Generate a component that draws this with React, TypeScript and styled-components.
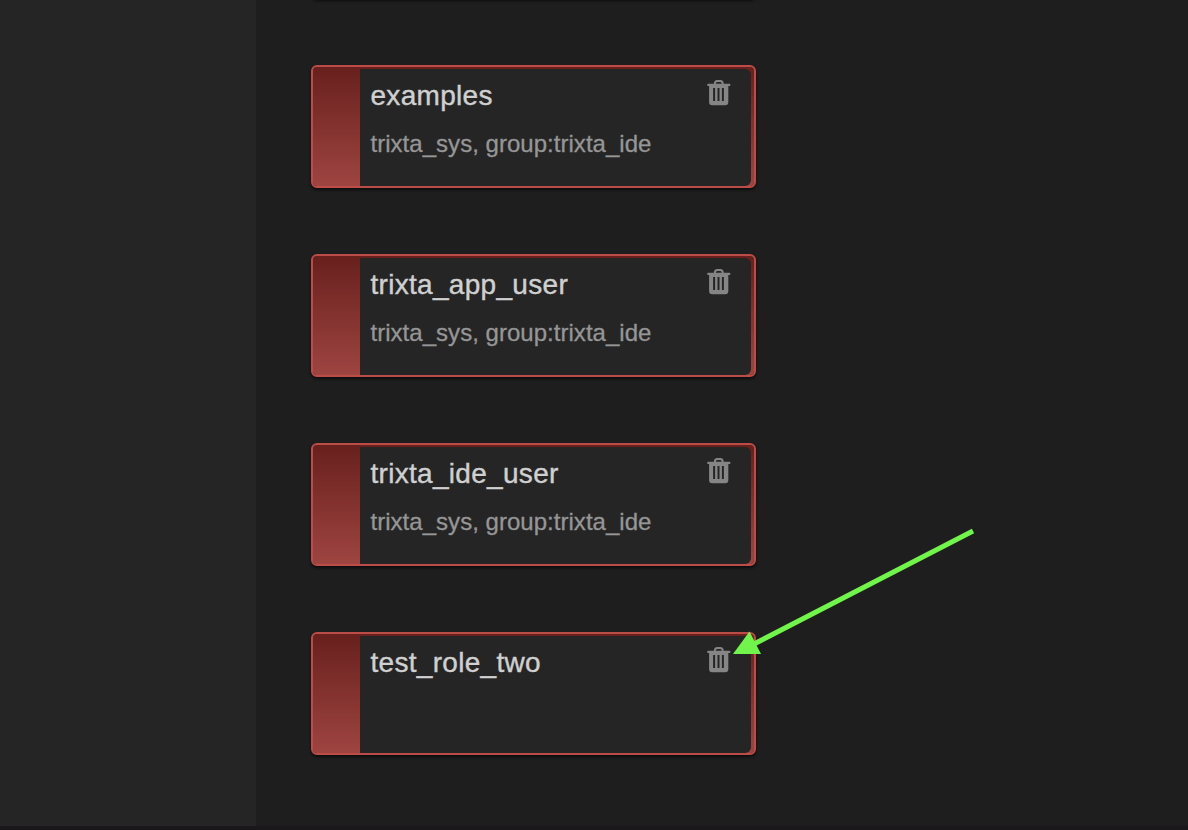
import React from "react";
import styled, { createGlobalStyle } from "styled-components";

const GlobalStyle = createGlobalStyle`
  * { box-sizing: border-box; }
  body { margin: 0; background: #1e1e1e; overflow: hidden; }
`;

const Page = styled.div`
  position: relative;
  display: flex;
  height: 830px;
  overflow: hidden;
  background: #1e1e1e;
  border-bottom: 4px solid #1b181b;
  font-family: "Liberation Sans", Helvetica, Arial, sans-serif;
`;

const Sidebar = styled.aside`
  flex: 0 0 256px;
  background: #252525;
`;

const RoleList = styled.main`
  flex: 1;
  display: flex;
  flex-direction: column;
  gap: 66px;
  margin-top: -124px;
  padding-left: 55px;
`;

const Card = styled.article`
  flex: 0 0 123px;
  width: 445px;
  display: flex;
  padding: 2px 3px 0 47px;
  border: 2px solid #bc4c48;
  border-radius: 6px;
  background: linear-gradient(#68201d, #9e4441) padding-box;
  box-shadow: 0 2px 3px rgba(0, 0, 0, 0.6);
`;

const CardBody = styled.div`
  flex: 1;
  display: flex;
  justify-content: space-between;
  padding: 10px 20px 0 10.5px;
  border-radius: 0 6px 6px 0;
  background: #252525;
`;

const RoleName = styled.h2`
  margin: 1px 0 0;
  font-size: 28px;
  line-height: 32px;
  font-weight: 400;
  letter-spacing: 0.3px;
  color: #d0d0d0;
  -webkit-text-stroke: 0.4px #d0d0d0;
`;

const RoleGroups = styled.p`
  margin: 18px 0 0;
  font-size: 24px;
  line-height: 28px;
  letter-spacing: 0.03px;
  color: #969696;
  -webkit-text-stroke: 0.3px #969696;
`;

const DeleteButton = styled.button`
  align-self: flex-start;
  display: flex;
  padding: 0;
  border: 0;
  background: none;
  color: #858585;
`;

const Arrow = styled.svg`
  position: absolute;
  left: 0;
  top: 0;
  pointer-events: none;
`;

const TrashIcon = () => (
  <svg width="24" height="27" viewBox="0 0 24 27">
    <path d="M7.900 5.500V4.500Q7.900 2 10.300 2h3Q15.700 2 15.700 4.500v1" fill="none" stroke="currentColor" strokeWidth="2" />
    <path
      fill="currentColor"
      fillRule="evenodd"
      d="M.9 4.800h21.800q.6 0 .6.600v1q0 .6-.6.600H21.300V23.300q0 3-3 3H5.100q-3 0-3-3V7H.9q-.6 0-.6-.6V5.400q0-.6.6-.6zM6.100 9v13h2V9zM10.500 9v13h2V9zM14.900 9v13h2V9z"
    />
  </svg>
);

const roles = [
  { name: "", groups: "" },
  { name: "examples", groups: "trixta_sys, group:trixta_ide" },
  { name: "trixta_app_user", groups: "trixta_sys, group:trixta_ide" },
  { name: "trixta_ide_user", groups: "trixta_sys, group:trixta_ide" },
  { name: "test_role_two", groups: "" },
];

export default function App() {
  return (
    <Page>
      <GlobalStyle />
      <Sidebar />
      <RoleList>
        {roles.map((role) => (
          <Card key={role.name}>
            <CardBody>
              <div>
                <RoleName>{role.name}</RoleName>
                {role.groups && <RoleGroups>{role.groups}</RoleGroups>}
              </div>
              <DeleteButton aria-label="Delete role">
                <TrashIcon />
              </DeleteButton>
            </CardBody>
          </Card>
        ))}
      </RoleList>
      <Arrow width="1188" height="830">
        <path d="M973 531L755 643.500" stroke="#71f54a" strokeWidth="5" />
        <path d="M733 654L749.500 631.500L761 654z" fill="#71f54a" />
      </Arrow>
    </Page>
  );
}
